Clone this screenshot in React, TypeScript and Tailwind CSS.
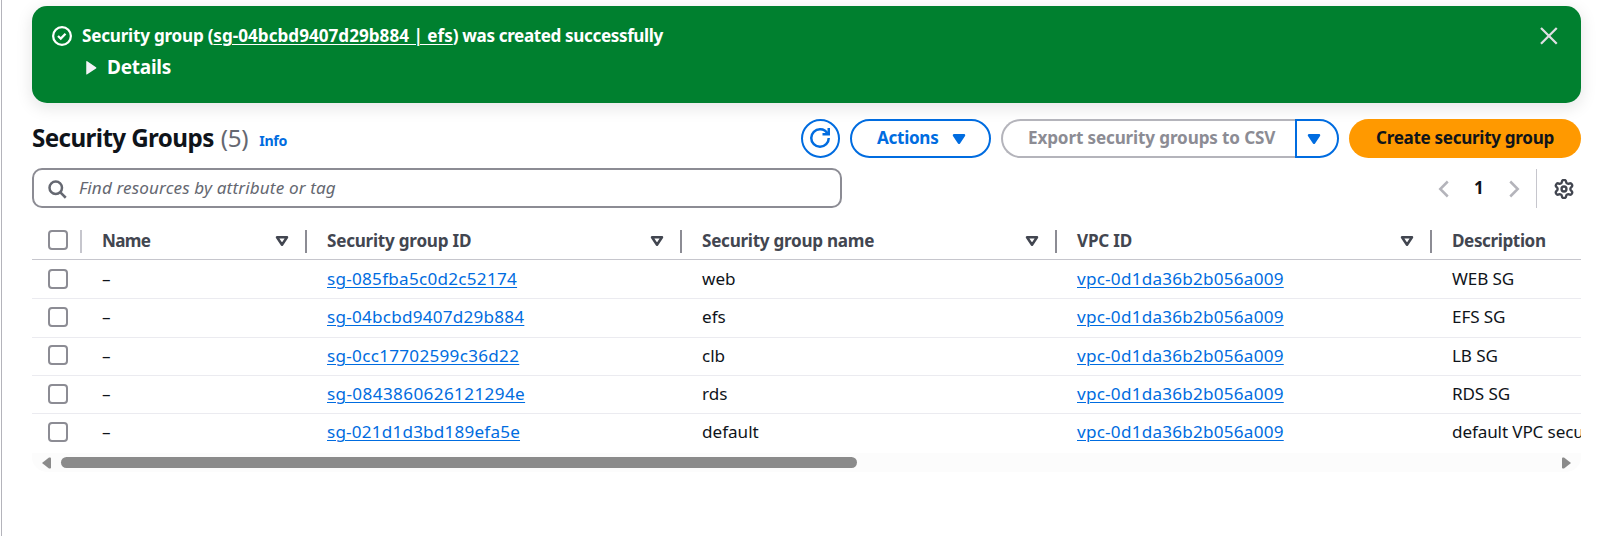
import type { ReactNode } from "react";

const columns = [
  { label: "Name", width: "w-[225px]", tracking: "tracking-[-0.7px]" },
  { label: "Security group ID", width: "w-[375px]", tracking: "tracking-[-0.24px]" },
  { label: "Security group name", width: "w-[375px]", tracking: "tracking-[-0.27px]" },
  { label: "VPC ID", width: "w-[375px]", tracking: "tracking-[-0.2px]" },
];

const rows = [
  { id: "sg-085fba5c0d2c52174", tracking: "tracking-[0.27px]", name: "web", description: "WEB SG", row: "h-[39px] border-b", check: "mt-[9px]", text: "pt-[6px]" },
  { id: "sg-04bcbd9407d29b884", tracking: "tracking-[0.24px]", name: "efs", description: "EFS SG", row: "h-[39px] border-b", check: "mt-[8px]", text: "pt-[5px]" },
  { id: "sg-0cc17702599c36d22", tracking: "tracking-[0.29px]", name: "clb", description: "LB SG", row: "h-[38px] border-b", check: "mt-[7px]", text: "pt-[5px]" },
  { id: "sg-0843860626121294e", tracking: "tracking-[0.39px]", name: "rds", description: "RDS SG", row: "h-[38px] border-b", check: "mt-[8px]", text: "pt-[5px]" },
  { id: "sg-021d1d3bd189efa5e", tracking: "tracking-[0.2px]", name: "default", description: "default VPC security group", row: "h-[39px]", check: "mt-[8px]", text: "pt-[5px]" },
];

const vpcId = "vpc-0d1da36b2b056a009";

function Icon({ children, className = "", stroke = 2 }: { children: ReactNode; className?: string; stroke?: number }) {
  return (
    <svg viewBox="0 0 16 16" width="20" height="20" fill="none" stroke="currentColor" strokeWidth={stroke} className={`shrink-0 overflow-visible ${className}`}>
      {children}
    </svg>
  );
}

function Caret({ filled = true, className = "" }: { filled?: boolean; className?: string }) {
  return (
    <Icon className={className}>
      <path d="M4 5h8l-4 6-4-6z" fill={filled ? "currentColor" : "none"} strokeLinejoin="round" />
    </Icon>
  );
}

function Checkbox({ className = "" }: { className?: string }) {
  return <span className={`ml-4 mr-[14px] block size-5 shrink-0 rounded-[4px] border-2 border-[#8c8c94] bg-white ${className}`} />;
}

function Link({ children, className = "" }: { children: ReactNode; className?: string }) {
  return <a className={`text-[#006ce0] underline decoration-1 underline-offset-[2px] ${className}`}>{children}</a>;
}

function Flash() {
  return (
    <section className="flex h-[97px] rounded-[15px] bg-[#00802f] pl-5 pr-[22px] pt-[17px] text-white shadow-[0_4px_16px_1px_rgba(0,7,22,0.1)]">
      <Icon className="mt-[3px]" stroke={1.8}>
        <circle cx="8" cy="8" r="7.1" />
        <path d="m4.8 8 2.2 2.1 3.8-3.9" />
      </Icon>
      <div className="ml-[10px] flex-1">
        <p className="font-bold leading-[25px] tracking-[-0.22px]">
          Security group (<a className="tracking-[0.02px] underline decoration-1 underline-offset-[2px]">sg-04bcbd9407d29b884 | efs</a>
          <span className="tracking-[-0.38px]">) was created successfully</span>
        </p>
        <div className="mt-[7px] flex items-center">
          <Icon className="text-[#f3f3f7]">
            <path d="M3.4 2.5Q3.4 1.7 4.2 2.2L11.2 7Q12 7.5 11.2 8L4.2 12.6Q3.4 13.1 3.4 12.3z" transform="translate(0 .4)" fill="currentColor" stroke="none" />
          </Icon>
          <span className="ml-[5px] text-[19px] font-bold leading-[25px] tracking-[-0.25px]">Details</span>
        </div>
      </div>
      <Icon className="mt-[3px] text-[#dedee3]" stroke={1.8}>
        <path d="m1.6 1.6 12.6 12.6M14.2 1.6 1.6 14.2" />
      </Icon>
    </section>
  );
}

function Toolbar() {
  return (
    <header className="mt-4 flex h-[39px] items-center">
      <h1 className="-mt-[2px] text-[24.2px] font-bold leading-[32px] tracking-[-0.6px] text-[#0f141a]">Security Groups</h1>
      <span className="-mt-[2px] ml-[7px] text-[24.2px] leading-[32px] tracking-[-0.3px] text-[#656871]">(5)</span>
      <a className="ml-[11px] mt-[5px] text-[14.2px] font-bold leading-5 tracking-[-0.3px] text-[#006ce0]">Info</a>
      <div className="ml-auto flex h-full gap-[10px] font-bold leading-[25px]">
        <button className="flex size-[39px] items-center justify-center rounded-full border-2 border-[#006ce0] text-[#006ce0]">
          <Icon className="-ml-px -mt-px">
            <path d="M10 5h5V0" />
            <path d="M15 8a6.957 6.957 0 0 1-7 7 6.957 6.957 0 0 1-7-7 6.957 6.957 0 0 1 7-7 6.87 6.87 0 0 1 6.3 4" />
          </Icon>
        </button>
        <button className="flex w-[141px] items-center rounded-full border-2 border-[#006ce0] pl-[25px] text-[#006ce0]">
          <span className="-mt-[2px] tracking-[-0.3px]">Actions</span>
          <Caret className="ml-[11px]" />
        </button>
        <div className="flex">
          <button className="w-[294px] whitespace-nowrap rounded-l-full border-2 border-r-0 border-[#b4b4bb] pb-[2px] pl-[25px] text-left tracking-[-0.14px] text-[#8c8c94]">Export security groups to CSV</button>
          <button className="flex w-11 items-center rounded-r-full border-2 border-[#006ce0] pl-[7px] text-[#006ce0]">
            <Caret />
          </button>
        </div>
        <button className="w-[232px] rounded-full bg-[#ff9900] pb-[2px] tracking-[-0.32px] text-[#0f141a]">Create security group</button>
      </div>
    </header>
  );
}

function Filters() {
  return (
    <div className="mt-[10px] flex h-10 items-center">
      <div className="flex h-10 w-[810px] items-center rounded-[10px] border-2 border-[#8c8c94] pl-[13px] text-[#656871]">
        <Icon className="mt-[1px]">
          <circle cx="7" cy="7" r="5" />
          <path d="m15 15-4.5-4.5" />
        </Icon>
        <span className="-mt-[2px] ml-[12px] italic leading-[25px] tracking-[0.14px]">Find resources by attribute or tag</span>
      </div>
      <nav className="ml-auto flex h-full items-center">
        <Icon className="mt-[2px] text-[#b4b4bb]">
          <path d="M11 2 5 8l6 6" />
        </Icon>
        <span className="-mt-px ml-[20px] w-[10px] font-bold text-[#0f141a]">1</span>
        <Icon className="ml-[20px] mt-[2px] text-[#b4b4bb]">
          <path d="m5 2 6 6-6 6" />
        </Icon>
        <span className="ml-[12px] mt-px h-[39px] w-px bg-[#c6c6cd]" />
        <svg viewBox="1 1 22 22" width="20" height="20" fill="none" stroke="currentColor" strokeWidth="2.6" strokeLinejoin="round" className="ml-[17px] mr-[7px] mt-[2px] text-[#424650]">
          <path d="M9.671 4.136a2.34 2.34 0 0 1 4.659 0 2.34 2.34 0 0 0 3.319 1.915 2.34 2.34 0 0 1 2.33 4.033 2.34 2.34 0 0 0 0 3.831 2.34 2.34 0 0 1-2.33 4.033 2.34 2.34 0 0 0-3.319 1.915 2.34 2.34 0 0 1-4.659 0 2.34 2.34 0 0 0-3.32-1.915 2.34 2.34 0 0 1-2.33-4.033 2.34 2.34 0 0 0 0-3.831A2.34 2.34 0 0 1 6.35 6.051a2.34 2.34 0 0 0 3.319-1.915" />
          <circle cx="12" cy="12" r="2.7" />
        </svg>
      </nav>
    </div>
  );
}

function GroupTable() {
  return (
    <div className="mt-[14px] overflow-hidden whitespace-nowrap leading-[25px] text-[#0f141a]">
      <div className="flex h-[38px] border-b border-[#c6c6cd] font-bold text-[#424650]">
        <Checkbox className="mt-2" />
        {columns.map((column, i) => (
          <div key={column.label} className={`flex shrink-0 ${i === 0 ? "-ml-[2px] w-[225px]" : column.width}`}>
            <span className={`mt-2 h-[23px] w-[2px] ${i === 0 ? "bg-[#c6c6cd]" : "bg-[#8c8c94]"}`} />
            <span className={`pl-5 pt-[6px] ${column.tracking}`}>{column.label}</span>
            <Caret filled={false} className="ml-auto mr-[13px] mt-[9px]" />
          </div>
        ))}
        <span className="mt-2 h-[23px] w-[2px] shrink-0 bg-[#8c8c94]" />
        <span className="pl-5 pt-[6px] tracking-[-0.4px]">Description</span>
      </div>
      {rows.map((row) => (
        <div key={row.id} className={`flex border-[#ebebf0] ${row.row}`}>
          <Checkbox className={row.check} />
          <span className={`w-[225px] shrink-0 pl-5 ${row.text}`}>–</span>
          <span className={`w-[375px] shrink-0 pl-5 ${row.text}`}>
            <Link className={row.tracking}>{row.id}</Link>
          </span>
          <span className={`w-[375px] shrink-0 pl-5 ${row.text}`}>{row.name}</span>
          <span className={`w-[375px] shrink-0 pl-5 ${row.text}`}>
            <Link className="tracking-[0.24px]">{vpcId}</Link>
          </span>
          <span className={`pl-5 tracking-[-0.12px] ${row.text}`}>{row.description}</span>
        </div>
      ))}
    </div>
  );
}

function Scrollbar() {
  return (
    <div className="flex h-[19px] items-center rounded-b-[15px] bg-[#fcfcfc] pl-[10px] pr-[10px] text-[#8b8b8b]">
      <svg width="9" height="12" viewBox="0 0 9 12" fill="currentColor" className="mt-[1px]">
        <path d="M0 6 7 .6Q9 0 9 1.2v9.6Q9 12 7 11.4z" />
      </svg>
      <span className="ml-[10px] h-[11px] w-[796px] rounded-full bg-[#8b8b8b]" />
      <svg width="9" height="12" viewBox="0 0 9 12" fill="currentColor" className="ml-auto mt-[1px]">
        <path d="M9 6 2 .6Q0 0 0 1.2v9.6Q0 12 2 11.4z" />
      </svg>
    </div>
  );
}

export default function App() {
  return (
    <main className="flex h-[536px] w-[1600px] overflow-hidden bg-white pl-px font-['Noto_Sans',sans-serif] text-[17.1px]">
      <div className="min-w-0 flex-1 border-l border-[#b4b4bb] pl-[30px] pr-[19px] pt-[6px]">
        <Flash />
        <Toolbar />
        <Filters />
        <GroupTable />
        <Scrollbar />
      </div>
    </main>
  );
}
